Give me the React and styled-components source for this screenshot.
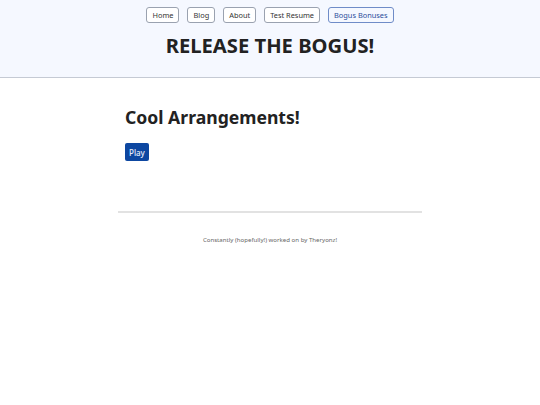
import React from "react";
import styled, { createGlobalStyle } from "styled-components";

const links = ["Home", "Blog", "About", "Test Resume", "Bogus Bonuses"];

function App() {
    return (
        <>
            <GlobalStyle />
            <Header>
                <Nav>
                    {links.map((l) => (
                        <NavButton key={l} $active={l === "Bogus Bonuses"}>{l}</NavButton>
                    ))}
                </Nav>
                <Title>RELEASE THE BOGUS!</Title>
            </Header>
            <Main>
                <Content>
                    <Heading>Cool Arrangements!</Heading>
                    <PlayButton>Play</PlayButton>
                </Content>
                <Rule />
                <Footer>Constantly (hopefully!) worked on by Theryonz!</Footer>
            </Main>
        </>
    );
}

const GlobalStyle = createGlobalStyle`
    body {
        margin: 0;
        background: #ffffff;
        font-family: "Noto Sans", "Open Sans", sans-serif;
        color: #222222;
    }
`;

const Header = styled.header`
    background: #f5f8ff;
    border-bottom: 1px solid #c5cad4;
    height: 78px;
    display: flex;
    flex-direction: column;
    align-items: center;
    padding-top: 7px;
    box-sizing: border-box;
`;

const Nav = styled.nav`
    display: flex;
    gap: 8px;
`;

const NavButton = styled.button`
    font-family: inherit;
    font-size: 7.4px;
    height: 16px;
    padding: 0 5px;
    background: ${(p) => (p.$active ? "#f5f8ff" : "#ffffff")};
    color: ${(p) => (p.$active ? "#2b4d9c" : "#333333")};
    border: 1px solid ${(p) => (p.$active ? "#6f8cc8" : "#9aa2b0")};
    border-radius: 3px;
    cursor: pointer;
`;

const Title = styled.h1`
    margin: 8px 0 0;
    font-size: 20.2px;
    line-height: 28px;
    font-weight: 700;
    color: #222222;
`;

const Main = styled.main`
    width: 304px;
    margin: 0 auto;
    padding-top: 26px;
`;

const Content = styled.section`
    padding: 0 7px 50px;
`;

const Heading = styled.h2`
    margin: 0 0 13px;
    font-size: 17.6px;
    font-weight: 700;
    line-height: 26px;
    color: #222222;
`;

const PlayButton = styled.button`
    display: block;
    font-family: inherit;
    font-size: 8px;
    font-weight: 500;
    height: 18px;
    padding: 0 4px;
    background: #0d47a1;
    color: #e8eefa;
    border: none;
    border-radius: 2px;
    cursor: pointer;
`;

const Rule = styled.hr`
    margin: 0;
    border: none;
    border-top: 2px solid #e2e2e2;
`;

const Footer = styled.p`
    margin: 22px 0 0;
    text-align: center;
    font-size: 6.1px;
    line-height: 9px;
    color: #666666;
`;

export default App;
